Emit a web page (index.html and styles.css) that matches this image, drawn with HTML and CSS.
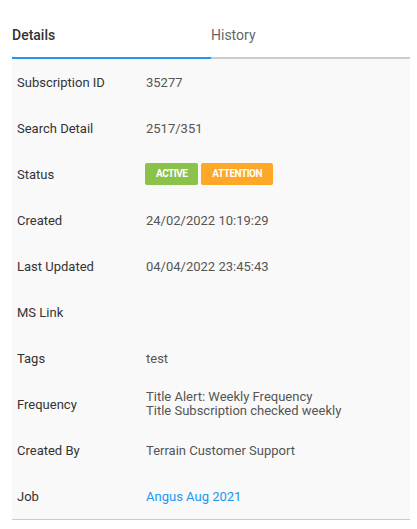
FILE: index.html
```html
<!DOCTYPE html>
<html>
<head>
<meta charset="utf-8">
<link rel="stylesheet" href="styles.css">
</head>
<body>
<div class="panel">
  <div class="tabs">
    <div class="tab active">Details</div>
    <div class="tab">History</div>
  </div>
  <div class="details">
    <div class="row"><div class="label">Subscription ID</div><div class="value">35277</div></div>
    <div class="row"><div class="label">Search Detail</div><div class="value">2517/351</div></div>
    <div class="row"><div class="label">Status</div><div class="value badges"><span class="badge green">ACTIVE</span><span class="badge orange">ATTENTION</span></div></div>
    <div class="row"><div class="label">Created</div><div class="value">24/02/2022 10:19:29</div></div>
    <div class="row"><div class="label">Last Updated</div><div class="value">04/04/2022 23:45:43</div></div>
    <div class="row"><div class="label">MS Link</div><div class="value"></div></div>
    <div class="row"><div class="label">Tags</div><div class="value">test</div></div>
    <div class="row"><div class="label">Frequency</div><div class="value multi"><div>Title Alert: Weekly Frequency</div><div>Title Subscription checked weekly</div></div></div>
    <div class="row"><div class="label">Created By</div><div class="value">Terrain Customer Support</div></div>
    <div class="row"><div class="label">Job</div><div class="value"><a class="link" href="#">Angus Aug 2021</a></div></div>
  </div>
</div>
</body>
</html>
```
FILE: styles.css
```css
html, body {
  margin: 0;
  padding: 0;
  background: #fff;
}
body {
  font-family: Roboto, "Noto Sans", sans-serif;
}
.panel {
  width: 398px;
  margin-left: 12px;
}
.tabs {
  display: flex;
}
.tab {
  flex: 1;
  padding: 25px 0 12px;
  font-size: 14px;
  line-height: 20px;
  color: #666;
  border-bottom: 2px solid #ccc;
}
.tab.active {
  color: #333;
  font-weight: 500;
  border-bottom-color: #2196f3;
}
.details {
  background: #f9f9f9;
  border-bottom: 1px solid #ccc;
}
.row {
  display: flex;
  align-items: center;
  height: 46px;
  padding-left: 5px;
  font-size: 13px;
}
.label {
  width: 129px;
  flex: none;
  color: #333;
}
.value {
  color: #555;
}
.multi {
  line-height: 14px;
}
.badges {
  display: flex;
  gap: 3px;
  margin-left: -1px;
}
.badge {
  display: inline-block;
  height: 22px;
  line-height: 22px;
  padding: 0 11px;
  border-radius: 2px;
  color: #fff;
  font-size: 10px;
  font-weight: 700;
  letter-spacing: -0.5px;
}
.green {
  background: #8bc34a;
}
.orange {
  background: #ffa726;
}
.link {
  color: #2196f3;
  text-decoration: none;
}
```
